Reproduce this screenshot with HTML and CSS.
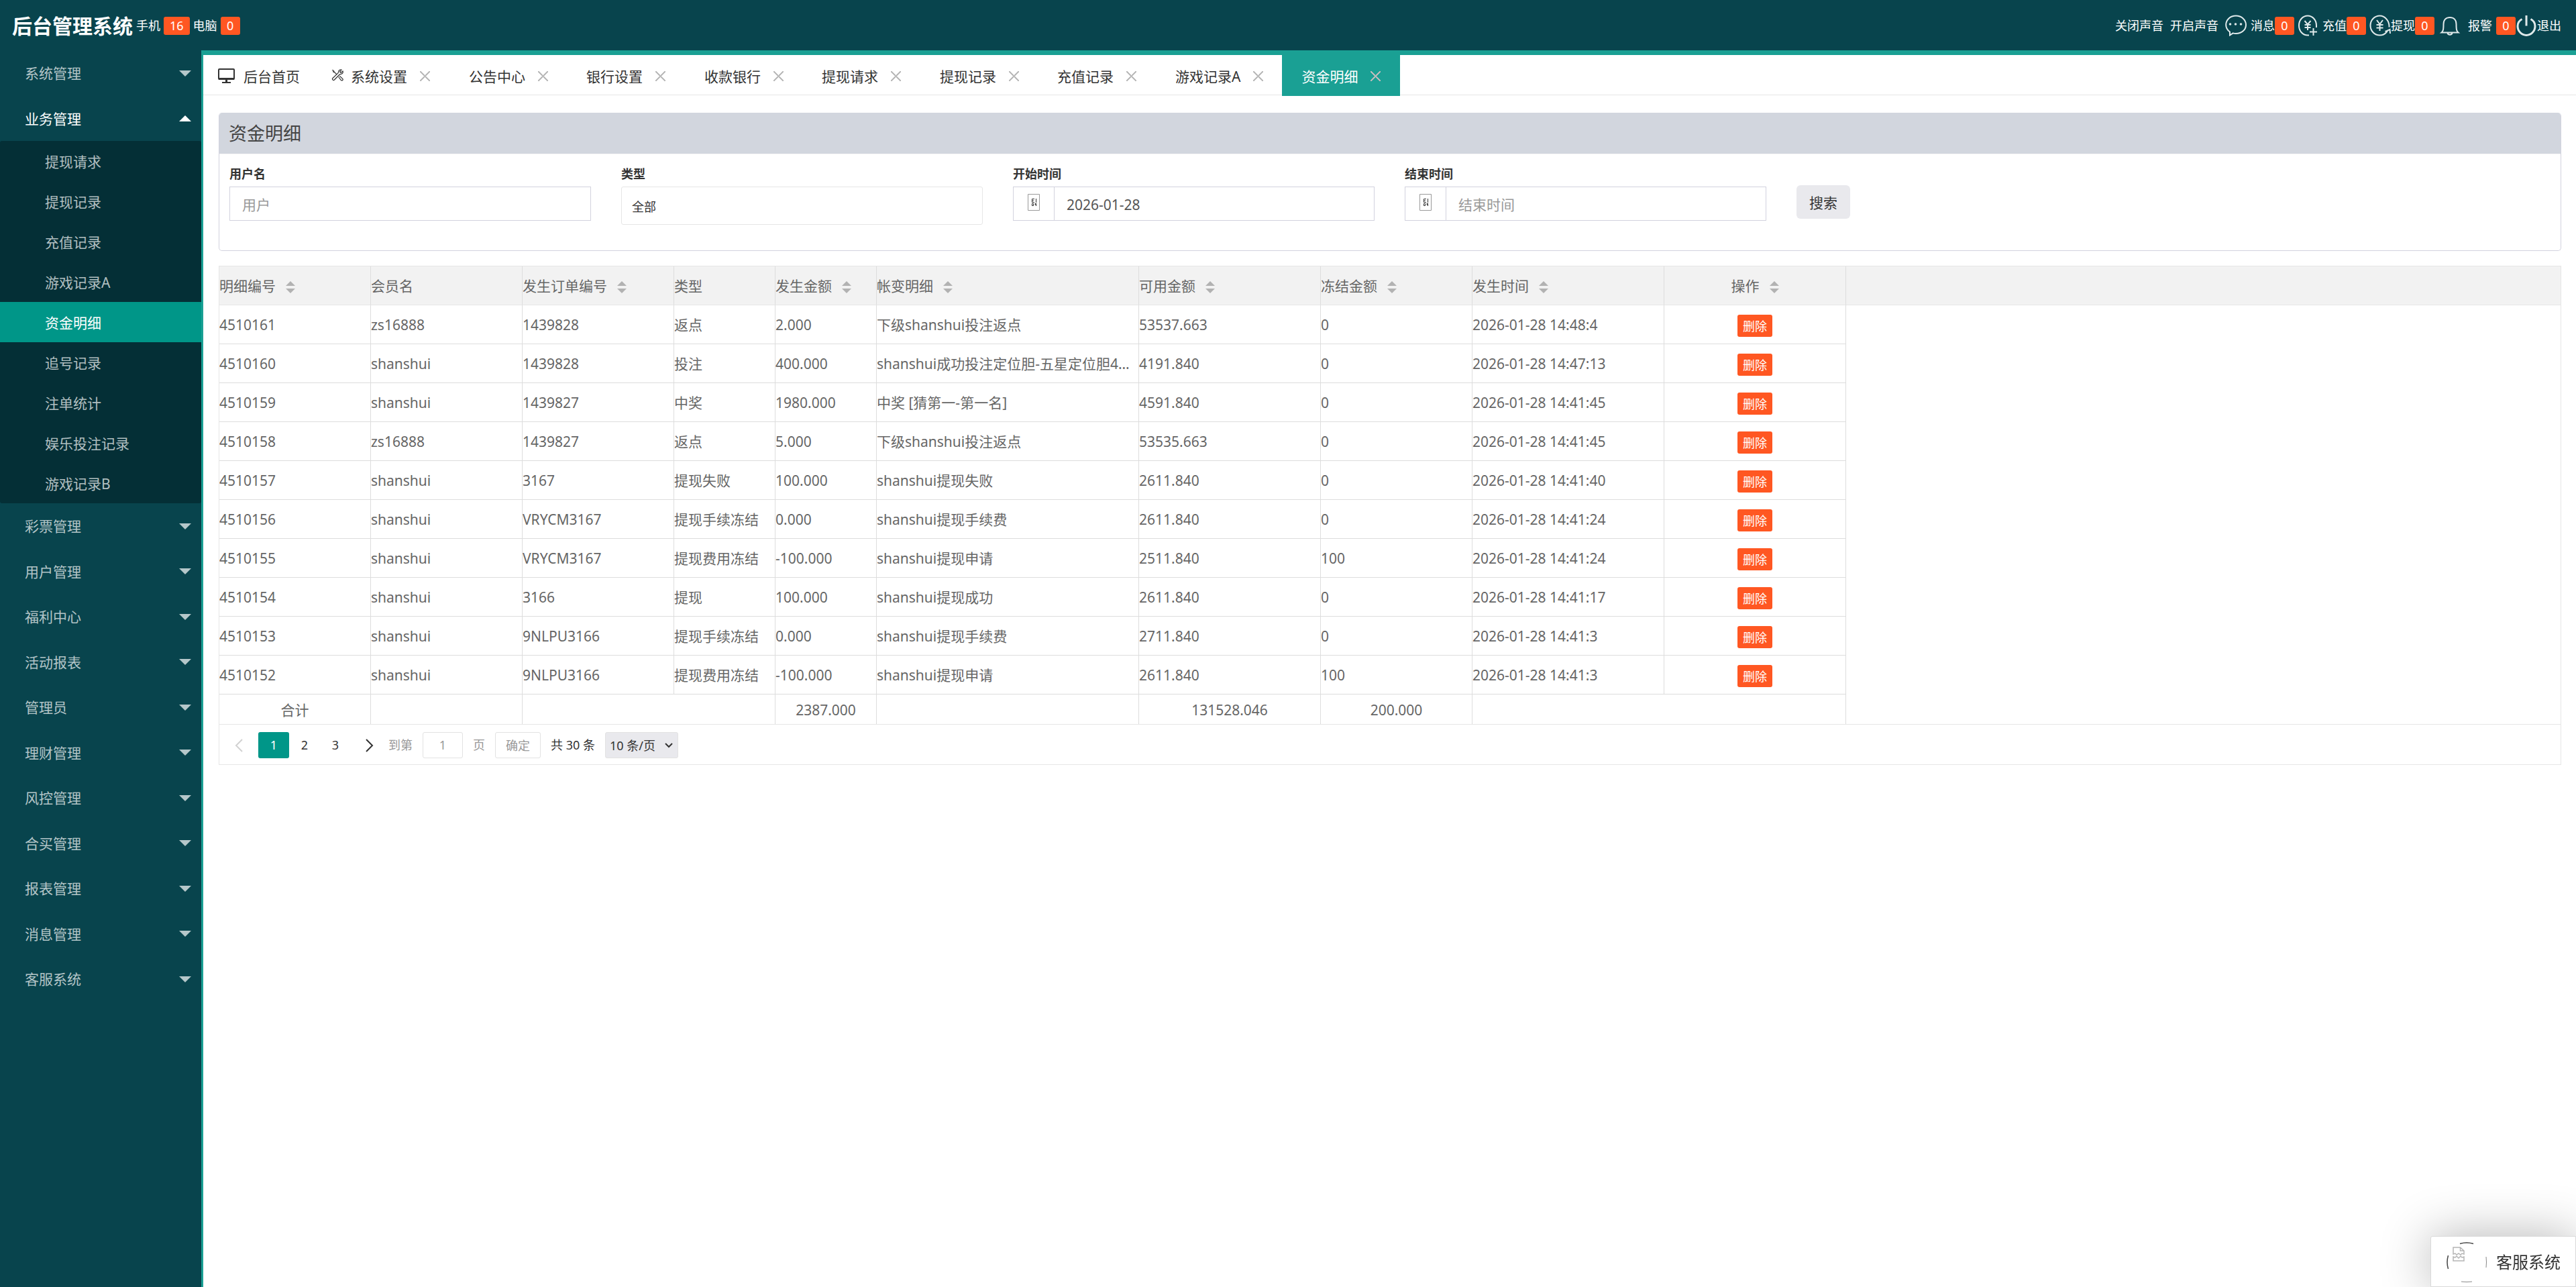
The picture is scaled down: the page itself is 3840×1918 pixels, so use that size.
FILE: index.html
```html
<!DOCTYPE html>
<html lang="zh-CN">
	<head>
		<meta charset="utf-8"/>
		<title>后台管理系统</title>
		<link rel="stylesheet" href="styles.css">
	</head>
	<body>
		<header class="header">
			<div class="header_left">
				<h1>后台管理系统</h1>
				<span>手机</span><span class="badge">16</span>
				<span>电脑</span><span class="badge">0</span>
			</div>
			<nav class="header_right">
				<a href="#">关闭声音</a>
				<a href="#">开启声音</a>
				<a href="#" class="notice msg">
					<svg width="32" height="32" viewBox="0 0 32 32"><path d="M7 25.500C3.500 23 1.200 19 1.200 15 1.200 7.500 7.500 1.500 16 1.500S31 7.500 31 15 24.500 28 16 28c-1.500 0-3-.2-4.300-.6L7 30.500z"/><g class="dot"><circle cx="7.500" cy="14" r="1.800"/><circle cx="15.500" cy="14" r="1.800"/><circle cx="23.500" cy="14" r="1.800"/></g></svg>
					<span>消息</span><span class="badge">0</span>
				</a>
				<a href="#" class="notice pay">
					<svg width="32" height="32" viewBox="0 0 32 32"><path d="M17 30.500h-2C7.500 30.500 2 24 2 16S7.500 1.500 15 1.500 28 8 28 16v3M10.500 9l4.500 5.500L19.500 9M15 14.500V23M10.500 15h9M10.500 19h9M23.500 20v11M18 25.500h11"/></svg>
					<span>充值</span><span class="badge">0</span>
				</a>
				<a href="#" class="notice cash">
					<svg width="32" height="32" viewBox="0 0 32 32"><path d="M29.500 18.500c.5-9-6-17-14-17S1.500 8 1.500 16s6 14.500 14 14.500c5 0 9-2.500 11.500-6.500M11 8l4.500 6L20 8M15.500 14v10M10.500 15h10M10.500 19.500h10M23.500 25l7-3 .5 6"/></svg>
					<span>提现</span><span class="badge">0</span>
				</a>
				<a href="#" class="notice alarm">
					<svg width="32" height="32" viewBox="0 0 32 32"><path d="M3.500 26.500c2.500-2 3-4.500 3-12.500C6.500 7.500 10.500 4 16 4s9.500 3.500 9.500 10c0 8 .5 10.500 3 12.500zM12.500 27c.5 3.500 6.500 3.500 7 0"/></svg>
					<span>报警</span><span class="badge">0</span>
				</a>
				<a href="#" class="notice logout">
					<svg width="32" height="32" viewBox="0 0 32 32"><path d="M9.500 6.500C5.500 8.500 3 12.500 3 17c0 7.500 6 13.500 13 13.500S29 24.500 29 17c0-4.500-2.500-8.500-6.500-10.500M16 1v15.500"/></svg>
					<span>退出</span>
				</a>
			</nav>
		</header>

		<div class="layout">
			<nav class="side">
				<ul class="menu">
					<li><a href="#">系统管理<i class="arrow"></i></a></li>
					<li class="open">
						<a href="#">业务管理<i class="arrow"></i></a>
						<ul class="submenu">
							<li><a href="#">提现请求</a></li>
							<li><a href="#">提现记录</a></li>
							<li><a href="#">充值记录</a></li>
							<li><a href="#">游戏记录A</a></li>
							<li><a href="#" class="this">资金明细</a></li>
							<li><a href="#">追号记录</a></li>
							<li><a href="#">注单统计</a></li>
							<li><a href="#">娱乐投注记录</a></li>
							<li><a href="#">游戏记录B</a></li>
						</ul>
					</li>
					<li><a href="#">彩票管理<i class="arrow"></i></a></li>
					<li><a href="#">用户管理<i class="arrow"></i></a></li>
					<li><a href="#">福利中心<i class="arrow"></i></a></li>
					<li><a href="#">活动报表<i class="arrow"></i></a></li>
					<li><a href="#">管理员<i class="arrow"></i></a></li>
					<li><a href="#">理财管理<i class="arrow"></i></a></li>
					<li><a href="#">风控管理<i class="arrow"></i></a></li>
					<li><a href="#">合买管理<i class="arrow"></i></a></li>
					<li><a href="#">报表管理<i class="arrow"></i></a></li>
					<li><a href="#">消息管理<i class="arrow"></i></a></li>
					<li><a href="#">客服系统<i class="arrow"></i></a></li>
				</ul>
			</nav>

			<main class="body">
				<ul class="tabs">
					<li class="home">
						<svg width="25" height="23" viewBox="0 0 25 23"><path fill="none" stroke="currentColor" stroke-width="2" d="M2 1h21q1 0 1 1v13q0 1-1 1H2q-1 0-1-1V2q0-1 1-1z"/><path fill="currentColor" d="M1 14h23v3H1zM11 17h3v3h-3zM6 20h13v2H6z"/></svg>
						<a href="#">后台首页</a>
					</li>
					<li>
						<svg width="18" height="18" viewBox="0 0 18 18"><path fill="none" stroke="currentColor" stroke-width="1.200" d="M1 1.500l2 .5 1.500 2.500L8 8M2 3.500L4.500 5M17 3l-3 2.500L12.500 4 15 1c-2-.8-4.500.8-4.500 3.200 0 .8-.2 1.300-.8 1.900L2 13.500c-1.500 1.500.8 4 2.400 2.500l7.800-8c.6-.5 1.200-.7 2-.7C16.500 7.200 17.800 5 17 3zM10.500 11.500l4 5c1.500 1.500 3.500-.7 2.200-2.200l-4.500-4"/></svg>
						<a href="#">系统设置</a><button class="close" type="button" aria-label="关闭"></button>
					</li>
					<li><a href="#">公告中心</a><button class="close" type="button" aria-label="关闭"></button></li>
					<li><a href="#">银行设置</a><button class="close" type="button" aria-label="关闭"></button></li>
					<li><a href="#">收款银行</a><button class="close" type="button" aria-label="关闭"></button></li>
					<li><a href="#">提现请求</a><button class="close" type="button" aria-label="关闭"></button></li>
					<li><a href="#">提现记录</a><button class="close" type="button" aria-label="关闭"></button></li>
					<li><a href="#">充值记录</a><button class="close" type="button" aria-label="关闭"></button></li>
					<li><a href="#">游戏记录A</a><button class="close" type="button" aria-label="关闭"></button></li>
					<li class="this"><a href="#">资金明细</a><button class="close" type="button" aria-label="关闭"></button></li>
				</ul>

				<div class="content">
					<section class="panel">
						<h2>资金明细</h2>
						<form class="search">
							<div class="field">
								<label for="username">用户名</label>
								<input id="username" class="box" type="text" placeholder="用户" autocomplete="off">
							</div>
							<div class="field">
								<label for="type">类型</label>
								<select id="type">
									<option>全部</option>
								</select>
							</div>
							<div class="field">
								<label for="start">开始时间</label>
								<div class="group">
									<span class="addon"><svg width="18" height="25" viewBox="0 0 18 25"><path fill="none" stroke="#999" d="M.5.5h17v24H.5z"/><path fill="none" stroke="#333" d="M10 7.500H6.500v5H10M6.500 10H9M12.500 7v6M6.500 14.500h2v3h-2zM13 14.500h-2v1.500h2M12.500 14v4"/></svg></span>
									<input id="start" class="box" type="text" value="2026-01-28" autocomplete="off">
								</div>
							</div>
							<div class="field">
								<label for="end">结束时间</label>
								<div class="group">
									<span class="addon"><svg width="18" height="25" viewBox="0 0 18 25"><path fill="none" stroke="#999" d="M.5.5h17v24H.5z"/><path fill="none" stroke="#333" d="M10 7.500H6.500v5H10M6.500 10H9M12.500 7v6M6.500 14.500h2v3h-2zM13 14.500h-2v1.500h2M12.500 14v4"/></svg></span>
									<input id="end" class="box" type="text" placeholder="结束时间" autocomplete="off">
								</div>
							</div>
							<div class="field">
								<button class="search_btn" type="button">搜索</button>
							</div>
						</form>
					</section>

					<section class="list">
						<table>
							<colgroup>
								<col class="w226"><col class="w226"><col class="w226"><col class="w151"><col class="w151"><col class="w391"><col class="w271"><col class="w226"><col class="w286"><col class="w271"><col>
							</colgroup>
							<thead>
								<tr>
									<th>明细编号<i class="sort"></i></th>
									<th>会员名</th>
									<th>发生订单编号<i class="sort"></i></th>
									<th>类型</th>
									<th>发生金额<i class="sort"></i></th>
									<th>帐变明细<i class="sort"></i></th>
									<th>可用金额<i class="sort"></i></th>
									<th>冻结金额<i class="sort"></i></th>
									<th>发生时间<i class="sort"></i></th>
									<th class="center">操作<i class="sort"></i></th>
									<th class="rest"></th>
								</tr>
							</thead>
							<tbody>
								<tr><td>4510161</td><td>zs16888</td><td>1439828</td><td>返点</td><td>2.000</td><td>下级shanshui投注返点</td><td>53537.663</td><td>0</td><td>2026-01-28 14:48:4</td><td class="center"><button class="del" type="button">删除</button></td><td class="rest"></td></tr>
								<tr><td>4510160</td><td>shanshui</td><td>1439828</td><td>投注</td><td>400.000</td><td>shanshui成功投注定位胆-五星定位胆4注单</td><td>4191.840</td><td>0</td><td>2026-01-28 14:47:13</td><td class="center"><button class="del" type="button">删除</button></td><td class="rest"></td></tr>
								<tr><td>4510159</td><td>shanshui</td><td>1439827</td><td>中奖</td><td>1980.000</td><td>中奖 [猜第一-第一名]</td><td>4591.840</td><td>0</td><td>2026-01-28 14:41:45</td><td class="center"><button class="del" type="button">删除</button></td><td class="rest"></td></tr>
								<tr><td>4510158</td><td>zs16888</td><td>1439827</td><td>返点</td><td>5.000</td><td>下级shanshui投注返点</td><td>53535.663</td><td>0</td><td>2026-01-28 14:41:45</td><td class="center"><button class="del" type="button">删除</button></td><td class="rest"></td></tr>
								<tr><td>4510157</td><td>shanshui</td><td>3167</td><td>提现失败</td><td>100.000</td><td>shanshui提现失败</td><td>2611.840</td><td>0</td><td>2026-01-28 14:41:40</td><td class="center"><button class="del" type="button">删除</button></td><td class="rest"></td></tr>
								<tr><td>4510156</td><td>shanshui</td><td>VRYCM3167</td><td>提现手续冻结</td><td>0.000</td><td>shanshui提现手续费</td><td>2611.840</td><td>0</td><td>2026-01-28 14:41:24</td><td class="center"><button class="del" type="button">删除</button></td><td class="rest"></td></tr>
								<tr><td>4510155</td><td>shanshui</td><td>VRYCM3167</td><td>提现费用冻结</td><td>-100.000</td><td>shanshui提现申请</td><td>2511.840</td><td>100</td><td>2026-01-28 14:41:24</td><td class="center"><button class="del" type="button">删除</button></td><td class="rest"></td></tr>
								<tr><td>4510154</td><td>shanshui</td><td>3166</td><td>提现</td><td>100.000</td><td>shanshui提现成功</td><td>2611.840</td><td>0</td><td>2026-01-28 14:41:17</td><td class="center"><button class="del" type="button">删除</button></td><td class="rest"></td></tr>
								<tr><td>4510153</td><td>shanshui</td><td>9NLPU3166</td><td>提现手续冻结</td><td>0.000</td><td>shanshui提现手续费</td><td>2711.840</td><td>0</td><td>2026-01-28 14:41:3</td><td class="center"><button class="del" type="button">删除</button></td><td class="rest"></td></tr>
								<tr><td>4510152</td><td>shanshui</td><td>9NLPU3166</td><td>提现费用冻结</td><td>-100.000</td><td>shanshui提现申请</td><td>2611.840</td><td>100</td><td>2026-01-28 14:41:3</td><td class="center"><button class="del" type="button">删除</button></td><td class="rest"></td></tr>
							</tbody>
							<tfoot>
								<tr><td>合计</td><td></td><td colspan="2"></td><td>2387.000</td><td></td><td>131528.046</td><td>200.000</td><td colspan="2"></td><td class="rest"></td></tr>
							</tfoot>
						</table>
						<div class="page">
							<a href="#" class="prev" aria-label="上一页"><svg width="12" height="20" viewBox="0 0 12 20"><path fill="none" stroke="currentColor" stroke-width="2" d="M11 1L2 10l9 9"/></svg></a>
							<a href="#" class="num this">1</a>
							<a href="#" class="num">2</a>
							<a href="#" class="num">3</a>
							<a href="#" class="next" aria-label="下一页"><svg width="12" height="20" viewBox="0 0 12 20"><path fill="none" stroke="currentColor" stroke-width="2" d="M1 1l9 9-9 9"/></svg></a>
							<label for="skip">到第</label>
							<input id="skip" type="text" value="1">
							<span class="unit">页</span>
							<button type="button" class="ok">确定</button>
							<span class="count">共 30 条</span>
							<span class="limit">
								<select aria-label="每页条数">
									<option>10 条/页</option>
								</select>
								<svg width="12" height="8" viewBox="0 0 12 8"><path fill="none" stroke="currentColor" stroke-width="2" d="M1 1l5 5 5-5"/></svg>
							</span>
						</div>
					</section>
				</div>
			</main>
		</div>

		<a href="#" class="service">
			<svg width="60" height="60" viewBox="0 0 60 60">
				<g fill="none" stroke="#444">
					<path stroke-width="1.500" d="M20 2.500q10-3 20 0M2.500 20q-3 10 0 20"/>
					<path stroke="#888" d="M59 22q1 8 0 16M22 59q8 1 16 0"/>
				</g>
				<path fill="none" stroke="#b5b5b5" stroke-width="1.500" d="M10 18V8h10.500L26 13v5l-3-1-2 2-3-2-3 2-2-2zM20.500 8v5H26M10 22l3 1 2-2 3 3 3-3 2 2 3-1v6H10z"/>
			</svg>
			<span>客服系统</span>
		</a>
	</body>
</html>
```
FILE: styles.css
```css
* {
	box-sizing: border-box;
}
body {
	margin: 0;
	min-height: 100vh;
	display: flex;
	flex-direction: column;
	background: #fff;
	color: #333;
	font: 21px/36px "Noto Sans", "Noto Sans CJK SC", sans-serif;
}
ul {
	list-style: none;
	margin: 0;
	padding: 0;
}
a {
	color: inherit;
	text-decoration: none;
}
input, select, button {
	font: inherit;
	color: inherit;
	margin: 0;
	border-radius: 0;
}
button {
	cursor: pointer;
}

/* header */
.header {
	display: flex;
	justify-content: space-between;
	align-items: center;
	height: 75px;
	padding: 1px 22px 0 18px;
	background: #08444d;
	color: #fff;
	font-size: 18px;
	line-height: 27px;
}
.header_left, .header_right, .notice {
	display: flex;
	align-items: center;
}
.header_left {
	gap: 5px;
}
.header h1 {
	margin: 0;
	padding-top: 2px;
	font-size: 30px;
	line-height: 36px;
}
.header_right {
	gap: 10px;
}
.header svg {
	fill: none;
	stroke: #dfe9ea;
	stroke-width: 2;
}
.header .dot {
	fill: #dfe9ea;
	stroke: none;
}
.header .logout svg {
	stroke-width: 3;
}
.badge {
	min-width: 29px;
	padding: 0 9px;
	border-radius: 3px;
	background: #ff5722;
	color: #fff;
	font-size: 18px;
	line-height: 27px;
	text-align: center;
}
.msg svg {
	margin-right: 6px;
}
.msg, .pay {
	margin-right: -5px;
}
.pay svg {
	margin-right: 5px;
}
.cash {
	margin-right: -3px;
}
.alarm {
	margin-right: -5px;
}
.alarm svg {
	margin-right: 11px;
}
.alarm .badge {
	margin-left: 6px;
}
.logout {
	margin-left: -5px;
}

/* side menu */
.layout {
	display: flex;
	flex: 1;
}
.side {
	flex: none;
	width: 300px;
	background: #08444d;
	color: rgba(255,255,255,.7);
}
.menu>li>a {
	display: flex;
	justify-content: space-between;
	align-items: center;
	height: 68px;
	padding: 0 15px 0 37px;
}
.menu>li:nth-child(even)>a {
	height: 67px;
}
.arrow {
	border: 9px solid transparent;
	border-top-color: currentColor;
	border-bottom-width: 0;
}
.open>a {
	color: #fff;
}
.open .arrow {
	border-width: 0 9px 9px;
	border-bottom-color: currentColor;
}
.submenu {
	border-radius: 3px;
	background: #042f36;
	overflow: hidden;
}
.submenu a {
	display: block;
	height: 60px;
	padding-left: 67px;
	line-height: 62px;
}
.submenu .this {
	background: #009688;
	color: #fff;
}

/* tabs */
.body {
	flex: 1;
	min-width: 0;
	border-top: 7px solid #1aa094;
	border-left: 3px solid #1aa094;
}
.tabs {
	display: flex;
	height: 60px;
	border-bottom: 1px solid #e6e6e6;
}
.tabs li {
	display: flex;
	align-items: center;
	height: 61px;
	padding: 2px 28px 0 29px;
}
.tabs li:nth-child(even) {
	padding-right: 29px;
}
.tabs .home {
	gap: 13px;
	padding: 2px 18px 0 22px;
}
.tabs li:nth-child(2) svg {
	margin: 0 11px 4px 0;
}
.tabs .this {
	background: #1aa094;
	color: #fff;
}
.close {
	width: 15px;
	height: 15px;
	margin-left: 19px;
	padding: 0;
	border: 0;
	background: linear-gradient(45deg, transparent 46%, #bbb 46%, #bbb 54%, transparent 54%), linear-gradient(-45deg, transparent 46%, #bbb 46%, #bbb 54%, transparent 54%);
}

/* search panel */
.content {
	padding: 26px 22px 0 23px;
}
.panel {
	border: 1px solid #d2d2de;
	border-top: 0;
	border-radius: 5px;
	overflow: hidden;
}
.panel h2 {
	margin: 0;
	padding-left: 14px;
	border-bottom: 1px solid #f6f6f6;
	background: #d2d6de;
	background-clip: padding-box;
	color: #444;
	font-size: 27px;
	font-weight: normal;
	line-height: 61px;
}
.search {
	display: grid;
	grid-template-columns: repeat(6, 1fr);
	gap: 45px;
	padding: 16px 16px 37px 15px;
}
.field {
	display: flex;
	flex-direction: column;
	align-items: stretch;
	height: 90px;
}
.field label {
	height: 32px;
	font-size: 18px;
	font-weight: bold;
	line-height: 26px;
}
.box {
	flex: 1;
	width: 100%;
	min-width: 0;
	height: 51px;
	padding: 2px 18px 0;
	border: 1px solid #d2d2de;
	background: #fff;
	color: #555;
	outline: 0;
}
.field>.box {
	flex: none;
}
.box::placeholder {
	color: #999;
	opacity: 1;
}
#type {
	height: 57px;
	padding: 2px 15px 0;
	border: 1px solid #e6e6e6;
	border-radius: 3px;
	background: #fff;
	font-size: 18px;
	appearance: none;
}
.group {
	display: flex;
}
.addon {
	display: flex;
	justify-content: center;
	align-items: center;
	width: 61px;
	height: 51px;
	padding-bottom: 4px;
	border: 1px solid #d2d2de;
	border-right: 0;
}
.search_btn {
	align-self: flex-start;
	height: 50px;
	margin-top: 30px;
	padding: 2px 19px 0;
	border: 0;
	border-radius: 6px;
	background: #e9e9ed;
}

/* table */
.list {
	margin-top: 22px;
	border: 1px solid #e6e6e6;
}
table {
	width: 100%;
	table-layout: fixed;
	border-collapse: separate;
	border-spacing: 0;
	color: #666;
}
.w151 {
	width: 151px;
}
.w226 {
	width: 226px;
}
.w271 {
	width: 271px;
}
.w286 {
	width: 286px;
}
.w391 {
	width: 391px;
}
th, td {
	height: 58px;
	padding: 0;
	border-right: 1px solid #ddd;
	border-bottom: 1px solid #ddd;
	font-weight: normal;
	text-align: left;
	white-space: nowrap;
	overflow: hidden;
	text-overflow: ellipsis;
}
th {
	background: #f2f2f2;
	border-bottom-color: #e6e6e6;
}
.center, tfoot td {
	text-align: center;
}
tfoot td {
	height: 44px;
	padding-top: 2px;
	border-bottom: 0;
}
.rest {
	border-right: 0;
}
td.rest {
	border-bottom: 0;
}
.sort {
	display: inline-grid;
	gap: 4px;
	margin-left: 15px;
	vertical-align: middle;
}
.sort::before, .sort::after {
	content: "";
	border: 7px solid transparent;
}
.sort::before {
	border-top-width: 0;
	border-bottom-color: #b2b2b2;
}
.sort::after {
	border-bottom-width: 0;
	border-top-color: #b2b2b2;
}
.del {
	height: 33px;
	padding: 2px 8px 0;
	border: 0;
	border-radius: 3px;
	background: #ff5722;
	color: #fff;
	font-size: 18px;
	line-height: 31px;
	vertical-align: middle;
}

/* pager */
.page {
	display: flex;
	align-items: center;
	height: 60px;
	padding: 2px 0 0 23px;
	border-top: 1px solid #e6e6e6;
	font-size: 18px;
	line-height: 39px;
}
.page svg {
	display: block;
}
.prev {
	margin-right: 23px;
	color: #d2d2d2;
}
.num {
	width: 46px;
	text-align: center;
}
.page .this {
	border-radius: 3px;
	background: #009688;
	color: #fff;
}
.next {
	margin: 0 22px;
}
.page label, .unit, .ok, #skip {
	color: #999;
}
#skip {
	width: 60px;
	height: 39px;
	margin: 0 15px;
	border: 1px solid #e2e2e2;
	border-radius: 3px;
	background: #fff;
	text-align: center;
}
.ok {
	height: 39px;
	margin: 0 15px;
	padding: 0 15px;
	border: 1px solid #e2e2e2;
	border-radius: 3px;
	background: #fff;
	line-height: 36px;
}
.limit {
	position: relative;
	margin-left: 15px;
}
.limit select {
	display: block;
	width: 109px;
	height: 39px;
	padding: 0 6px;
	border: 1px solid #e2e2e2;
	border-radius: 3px;
	background: #e9e9ed;
	appearance: none;
}
.limit svg {
	position: absolute;
	top: 16px;
	right: 8px;
	pointer-events: none;
}

/* customer service */
.service {
	position: fixed;
	right: 0;
	bottom: 0;
	display: flex;
	align-items: center;
	gap: 14px;
	height: 76px;
	padding: 2px 22px 0 23px;
	border: 1px solid #d9d9d9;
	border-radius: 3px 0 0 0;
	background: #fff;
	box-shadow: 0 0 75px rgba(0,0,0,.3);
	font-size: 24px;
}
```
